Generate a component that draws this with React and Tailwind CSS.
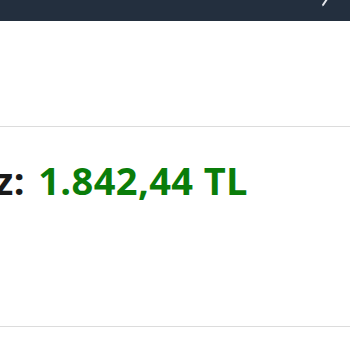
export default function App() {
  return (
    <div className="min-h-[350px] bg-white overflow-hidden" style={{ fontFamily: '"Open Sans", "Noto Sans", sans-serif' }}>
      <header className="h-[21px] bg-[#232f3e] flex justify-end pr-[22px]">
        <svg width="8" height="8" viewBox="0 0 8 8" className="-mt-px">
          <path d="M7 0 L3 6" stroke="#e5e7eb" strokeWidth="2" strokeLinecap="round" />
          <path d="M2 7 L2.5 7" stroke="#6b7280" strokeWidth="1.5" />
        </svg>
      </header>
      <div className="h-[105px]" />
      <section className="h-[201px] border-y border-[#dcdcdc] pt-[33px]">
        <div className="flex justify-end pr-[102px] whitespace-nowrap">
          <p className="text-[38px] leading-[40px] font-bold tracking-[0.4px] text-[#1a1a1a]">
            Toplam Borcunuz: <span className="ml-[3px] text-[#0a7d0a]">1.842,44 TL</span>
          </p>
        </div>
      </section>
    </div>
  );
}
